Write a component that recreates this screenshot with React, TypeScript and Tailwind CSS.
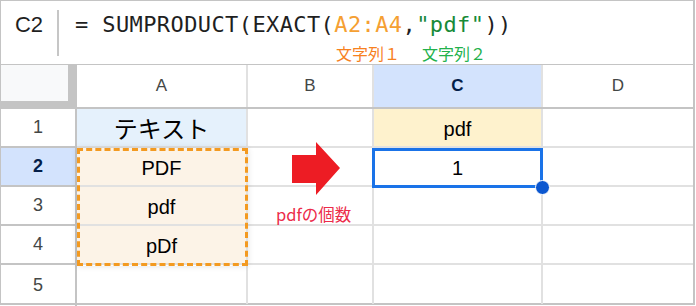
const cols = [
  { name: "A", w: "w-[171px]" },
  { name: "B", w: "w-[126px]" },
  { name: "C", w: "w-[169px]", active: true },
  { name: "D", w: "w-[150px]", last: true },
];

type Cell = { text?: string; bg?: string; cls?: string };

const rows: { n: number; active?: boolean; cells: Cell[] }[] = [
  {
    n: 1,
    cells: [
      { text: "テキスト", bg: "bg-[#e5f1fc]", cls: "text-[24px] font-['Noto_Sans_CJK_JP',sans-serif]" },
      {},
      { text: "pdf", bg: "bg-[#fef2cd]", cls: "pt-[3px]" },
      {},
    ],
  },
  { n: 2, active: true, cells: [{ text: "PDF", bg: "bg-[#fcf3e7]", cls: "pt-[3px]" }, {}, { text: "1", cls: "pt-[3px]" }, {}] },
  { n: 3, cells: [{ text: "pdf", bg: "bg-[#fcf3e7]", cls: "pt-[3px]" }, {}, {}, {}] },
  { n: 4, cells: [{ text: "pDf", bg: "bg-[#fcf3e7]", cls: "pt-[3px]" }, {}, {}, {}] },
  { n: 5, cells: [{}, {}, {}, {}] },
];

function FormulaBar() {
  return (
    <div className="flex h-[64px] border-b border-[#c4c4c4]">
      <div className="w-[56px] pt-[11px] text-center text-[22px] leading-[26px] text-[#1f1f1f]">
        C2
      </div>
      <div className="mt-[9px] h-[46px] w-[2px] bg-[#c6c6c6]" />
      <div className="pl-[16px] pt-[11px]">
        <div className="whitespace-pre font-['DejaVu_Sans_Mono',monospace] text-[22px] leading-[26px] tracking-[0.4px] text-[#1f1f1f]">
          = SUMPRODUCT(EXACT(
          <span className="text-[#f5a032]">A2:A4</span>,
          <span className="text-[#188a38]">"pdf"</span>))
        </div>
        <div className="mt-[5px] flex font-['Noto_Sans_CJK_JP',sans-serif] text-[16px] leading-[20px]">
          <span className="ml-[261px] text-[#f7811f]">文字列１</span>
          <span className="ml-[22px] text-[#22b14c]">文字列２</span>
        </div>
      </div>
    </div>
  );
}

function HeaderRow() {
  return (
    <div className="flex h-[44px] border-b-2 border-[#c4c4c4]">
      <div className="w-[76px] bg-[#c4c4c4]">
        <div className="h-[36px] w-[67px] bg-[#f8f9fa]" />
      </div>
      {cols.map((c) => (
        <div
          key={c.name}
          className={`${c.w} flex items-center justify-center text-[17px] ${
            c.last ? "" : "border-r-2 border-[#e1e1e1]"
          } ${c.active ? "bg-[#d3e3fd] font-bold text-[#041e49]" : "text-[#444746]"}`}
        >
          {c.name}
        </div>
      ))}
    </div>
  );
}

export default function App() {
  return (
    <div className="relative h-[306px] w-[696px] bg-white font-['Liberation_Sans','Noto_Sans_CJK_JP',sans-serif]">
      <div className="h-[305px] w-[695px] border-t border-l border-r-2 border-b-2 border-[#c4c4c4]">
        <FormulaBar />
        <HeaderRow />
        {rows.map((r) => (
          <div key={r.n} className={`flex h-[39px] ${r.n === 5 ? "" : "border-b-2 border-[#e1e1e1]"}`}>
            <div
              className={`-mb-[2px] flex w-[76px] items-center justify-center border-r-2 border-[#c4c4c4] text-[18px] ${
                r.n === 5 ? "" : "border-b-2"
              } ${r.active ? "bg-[#d3e3fd] font-bold text-[#041e49]" : "text-[#444746]"}`}
            >
              {r.n}
            </div>
            {r.cells.map((cell, i) => (
              <div
                key={i}
                className={`${cols[i].w} flex items-center justify-center text-[20px] text-black ${
                  cols[i].last ? "" : "border-r-2 border-[#e1e1e1]"
                } ${cell.bg ?? ""} ${cell.cls ?? ""}`}
              >
                {cell.text}
              </div>
            ))}
          </div>
        ))}
      </div>

      {/* copy range A2:A4 */}
      <div className="absolute left-[77px] top-[148px] h-[118px] w-[171px] border-[3px] border-dashed border-[#f39a21] shadow-[0_0_6px_rgba(0,0,0,0.12)]" />

      {/* active cell C2 */}
      <div className="absolute left-[372px] top-[148px] h-[40px] w-[171px] border-[3px] border-[#1a73e8]" />
      <div className="absolute left-[535px] top-[180px] h-[15px] w-[15px] rounded-full border border-white bg-[#0b57d0]" />

      {/* annotation */}
      <svg className="absolute left-[292px] top-[142px]" width="48" height="53" viewBox="0 0 48 53">
        <polygon points="0,13 24,13 24,0 48,26 24,53 24,41 0,41" fill="#ed1c24" />
      </svg>
      <div className="absolute left-[276px] top-[203px] font-['Noto_Sans_CJK_JP',sans-serif] text-[16.5px] leading-[22px] text-[#ec2c4a]">
        pdfの個数
      </div>
    </div>
  );
}
